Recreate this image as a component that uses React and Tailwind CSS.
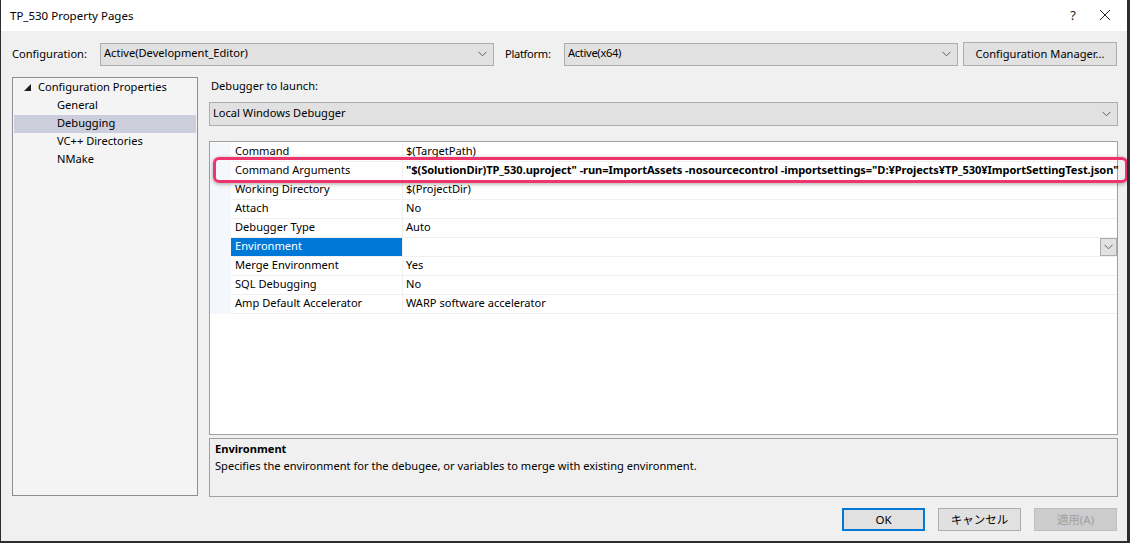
import React from 'react';

// TP_530 Property Pages — Visual Studio project property dialog (Debugging page).

const FONT = { fontFamily: '"Noto Sans", "Noto Sans CJK JP", sans-serif' };

const ROWS = [
  { name: 'Command', value: '$(TargetPath)' },
  {
    name: 'Command Arguments',
    value:
      '"$(SolutionDir)TP_530.uproject" -run=ImportAssets -nosourcecontrol -importsettings="D:¥Projects¥TP_530¥ImportSettingTest.json"',
    bold: true,
  },
  { name: 'Working Directory', value: '$(ProjectDir)' },
  { name: 'Attach', value: 'No' },
  { name: 'Debugger Type', value: 'Auto' },
  { name: 'Environment', value: '', selected: true },
  { name: 'Merge Environment', value: 'Yes' },
  { name: 'SQL Debugging', value: 'No' },
  { name: 'Amp Default Accelerator', value: 'WARP software accelerator' },
];

function Chevron() {
  return (
    <svg width="9" height="6" viewBox="0 0 9 6" className="shrink-0">
      <path d="M0.5 0.8 L4.5 4.8 L8.5 0.8" fill="none" stroke="#606060" strokeWidth="1" />
    </svg>
  );
}

function Combo({ value, className = '', textClass = '' }) {
  return (
    <div
      className={`flex items-center justify-between border border-[#adadad] bg-[#e1e1e1] pl-[3px] pr-[6px] ${className}`}
    >
      <span className={`text-[11.1px] text-black pb-px ${textClass}`}>{value}</span>
      <Chevron />
    </div>
  );
}

function Button({ children, variant }) {
  const base = 'w-[83px] h-[23px] flex items-center justify-center text-[11.5px]';
  if (variant === 'default')
    return <div className={`${base} border-2 border-[#0078d7] bg-[#e1e1e1] text-black`}>{children}</div>;
  if (variant === 'disabled')
    return <div className={`${base} border border-[#bfbfbf] bg-[#cccccc] text-[#a0a0a0]`}>{children}</div>;
  return <div className={`${base} border border-[#adadad] bg-[#e1e1e1] text-black`}>{children}</div>;
}

export default function App() {
  return (
    <div
      className="relative w-[1130px] h-[543px] flex flex-col bg-[#f0f0f0] border-l border-r-[3px] border-b-2 border-[#2d2d30] overflow-hidden"
      style={FONT}
    >
      {/* Title bar */}
      <div className="h-[31px] shrink-0 bg-white flex items-center justify-between pl-[9px]">
        <span className="text-[11.5px] text-black">TP_530 Property Pages</span>
        <div className="flex items-center h-full">
          <span className="w-[20px] text-center text-[13px] text-[#222]">?</span>
          <svg width="44" height="31" viewBox="0 0 44 31">
            <path d="M17 10 L27 20 M27 10 L17 20" stroke="#222" strokeWidth="1" />
          </svg>
        </div>
      </div>

      {/* Configuration / Platform row */}
      <div className="mt-[11px] h-[24px] flex items-center pl-[11px] pr-[10px]">
        <span className="w-[88px] text-[11.1px] text-black">Configuration:</span>
        <Combo value="Active(Development_Editor)" className="w-[394px] h-[23px]" />
        <span className="ml-[11px] w-[59px] text-[11.1px] text-black tracking-[-0.3px]">Platform:</span>
        <Combo value="Active(x64)" className="w-[394px] h-[23px]" textClass="tracking-[-0.3px]" />
        <div className="ml-[5px] w-[154px] h-[24px] border border-[#adadad] bg-[#e1e1e1] flex items-center justify-center text-[11.1px] text-black">
          Configuration Manager...
        </div>
      </div>

      {/* Main area */}
      <div className="mt-[11px] flex pl-[11px]">
        {/* Tree */}
        <div className="w-[186px] h-[419px] border border-[#8e8f94] bg-[#f4f4f4] pt-[1px] px-px">
          <div className="h-[18px] flex items-center text-[11.1px] text-black pb-px">
            <svg width="7" height="7" viewBox="0 0 7 7" className="ml-[10px] mr-[7px]">
              <polygon points="0,7 7,7 7,0" fill="#1e1e1e" />
            </svg>
            Configuration Properties
          </div>
          {['General', 'Debugging', 'VC++ Directories', 'NMake'].map((t) => (
            <div
              key={t}
              className={`h-[18px] flex items-center pl-[43px] text-[11.1px] text-black pb-px ${
                t === 'Debugging' ? 'bg-[#cccedb]' : ''
              }`}
            >
              {t}
            </div>
          ))}
        </div>

        {/* Right column */}
        <div className="ml-[11px] w-[909px] flex flex-col">
          <div className="h-[19px] flex items-center pl-[2px] text-[11.1px] text-black">Debugger to launch:</div>
          <Combo value="Local Windows Debugger" className="mt-[6px] h-[24px]" />

          {/* Property grid */}
          <div className="mt-[15px] h-[294px] border border-[#a0a0a0] bg-white pt-px">
            {ROWS.map((r) => (
              <div key={r.name} className="flex h-[19px]">
                <div className="w-[21px] shrink-0 bg-[#f4f7fc]" />
                <div
                  className={`w-[172px] shrink-0 flex items-center pl-[4px] pb-[2px] text-[11.1px] border-b border-r border-[#f0f0f0] ${
                    r.selected ? 'bg-[#0078d7] text-white border-[#0078d7]' : 'text-black'
                  }`}
                >
                  {r.name}
                </div>
                <div className="flex-1 min-w-0 flex items-center justify-between pl-[3px] border-b border-[#f0f0f0] text-[11.1px] text-black whitespace-nowrap">
                  <span className={`pb-px ${r.bold ? 'font-bold tracking-[-0.08px]' : ''}`}>{r.value}</span>
                  {r.selected && (
                    <div className="w-[17px] h-[18px] border border-[#adadad] bg-[#e1e1e1] flex items-center justify-center">
                      <Chevron />
                    </div>
                  )}
                </div>
              </div>
            ))}
          </div>

          {/* Description */}
          <div className="mt-[3px] h-[59px] border border-[#a0a0a0] bg-[#f0f0f0] pl-[5px] pt-px">
            <div className="text-[11.1px] font-bold text-black leading-[17px]">Environment</div>
            <div className="text-[11.1px] text-black leading-[17px]">
              Specifies the environment for the debugee, or variables to merge with existing environment.
            </div>
          </div>
        </div>
      </div>

      {/* Buttons */}
      <div className="mt-[11px] flex justify-end gap-[13px] pr-[10px]">
        <Button variant="default">OK</Button>
        <Button>キャンセル</Button>
        <Button variant="disabled">適用(A)</Button>
      </div>

      {/* Annotation highlight */}
      <div className="absolute left-[212px] top-[157px] w-[915px] h-[26px] rounded-[6px] border-[3px] border-[#f0346c] shadow-[0_1px_4px_rgba(0,0,0,0.35)] pointer-events-none" />
    </div>
  );
}
